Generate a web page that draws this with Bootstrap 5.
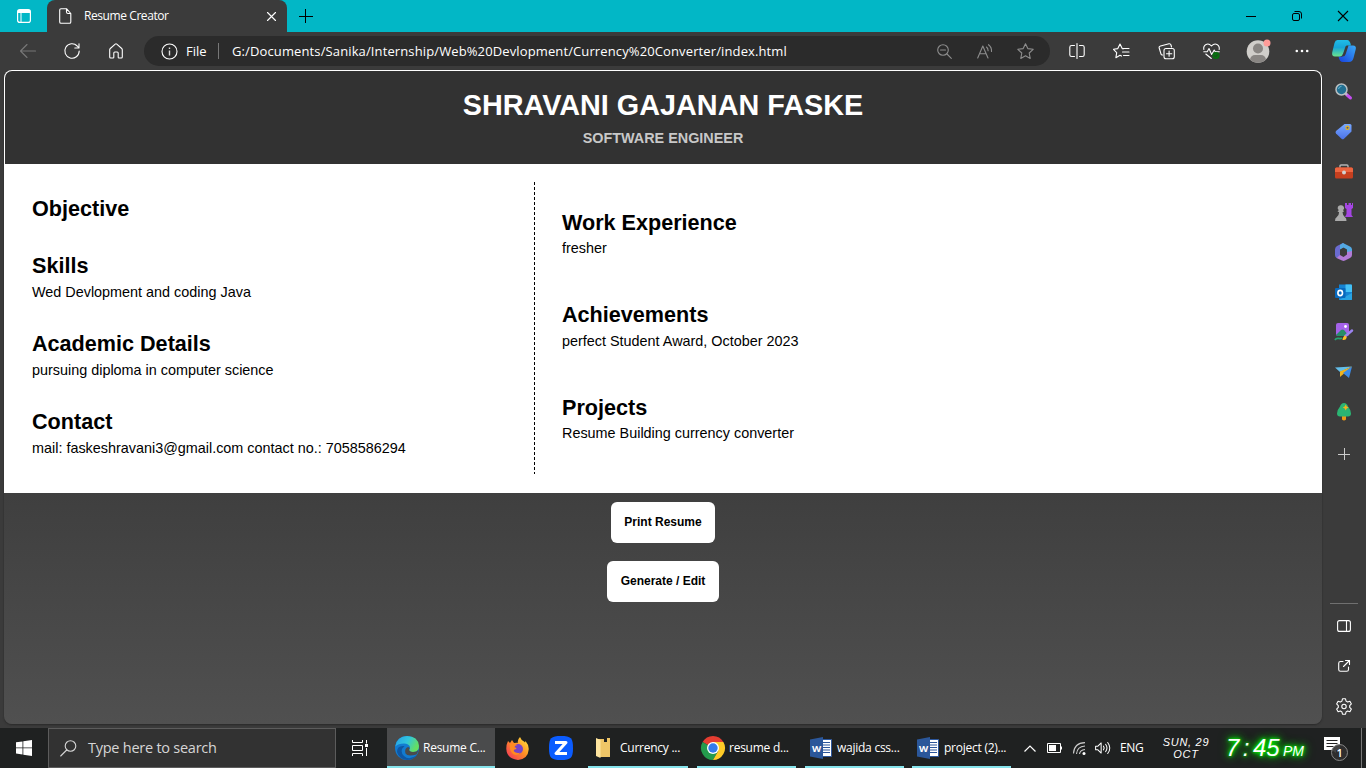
<!DOCTYPE html>
<html lang="en">
<head>
<meta charset="utf-8">
<title>Resume Creator</title>
<link href="https://cdn.jsdelivr.net/npm/bootstrap@5.3.0/dist/css/bootstrap.min.css" rel="stylesheet">
<style>
body{width:1366px;height:768px;overflow:hidden;background:#3b3b3b;color:#fff;font-family:"Open Sans","Noto Sans",sans-serif;font-size:12px;line-height:16px}
svg{display:block;flex:none;overflow:visible}
.ln{fill:none;stroke:currentColor;stroke-width:1.1;stroke-linecap:round;stroke-linejoin:round}
.titlebar{height:32px;background:#02b7c6}
.tabs-btn{width:47px}
.tab-active{width:240px;background:#3b3b3b;border-radius:8px 8px 0 0;padding:0 10px 0 12px}
.tab-name{margin-left:12px;letter-spacing:-.42px}
.win-btn{width:46px;color:#000}
.toolbar{height:38px;padding-left:6px}
.tool{width:44px}
.addr{width:906px;height:30px;margin:0 5px 0 6px;border-radius:15px;background:#2b2b2b;padding:0 4px 0 17px}
.addr .tool{width:40.5px;color:#8d8d8d}
.addr-label{font-size:13px;margin-left:8px;width:32px}
.addr-rule{width:1px;height:16px;background:#777}
.addr-url{font-size:13px;letter-spacing:.12px;margin-left:13px;white-space:nowrap}
.ext .tool{width:44.6px}
.window-body{height:658px}
.viewport-box{width:1318px;height:654px;margin-left:4px;border-radius:8px;background:linear-gradient(#323232,#323232 94px,#3f3f3f 423px,#505050);font-family:"Liberation Sans",Arial,sans-serif;color:#000;box-shadow:0 1px 2px #292929}
.resume{height:423px;background:#fff;padding:1px 1px 0;border-radius:8px 8px 0 0}
.resume-head{height:93px;background:#323232;border-radius:7px 7px 0 0;padding-top:17px}
.resume-head h1{font-size:28.8px;line-height:34px;font-weight:700;color:#fff}
.resume-head h2{font-size:14.4px;line-height:18px;font-weight:700;color:#c8c8c8;margin-top:7px}
.resume-cols{padding-top:18px}
.col-left{width:530px;height:292px;padding:14px 0 0 27px;background:repeating-linear-gradient(#000 0 3px,transparent 3px 5px) right/1px 100% no-repeat}
.col-right{padding:28px 0 0 27px}
.resume h3{font-size:21.6px;line-height:26px;font-weight:700;margin:0}
.resume p{font-size:14.4px;line-height:17px;margin:5px 0 0}
.col-left section{height:78px}
.col-left section:first-child{height:57px}
.col-right section{height:92px}
.col-right section + section{height:93px}
.col-right p{margin-top:4px}
.col-right section:nth-child(2) p{margin-top:5px}
.act{height:41px;border-radius:6px;background:#fff;color:#000;font-size:12px;font-weight:700;padding:0 13.5px;line-height:39px;border:0}
.sidebar{width:44px;padding-top:1.6px}
.sidebar .side{height:40.1px;margin-left:-1px}
.side-rule{width:28px;height:1px;background:#707070}
.taskbar{height:40px;background:#1f2121}
.search{width:288px;height:40px;background:#323232;border:1px solid #5c5c5c;padding-left:11px;font-size:14.5px;color:#d6d6d6}
.search-label{margin-left:11px;letter-spacing:-.25px}
.task{height:40px;white-space:nowrap;letter-spacing:-.25px}
.task.open{border-bottom:2px solid #86e4ec;padding-top:2px}
.task.current{background:#4a4b4c}
.date{width:50px;font:italic 11px/12px "Liberation Sans",sans-serif;letter-spacing:.7px;text-align:center}
.clock{width:78px;height:26px;font:italic 400 24px/26px "Liberation Sans",sans-serif;text-shadow:0 0 3px #0f0,0 0 5px #0f0,0 0 9px #0d0,0 0 12px #0a0}
.clock small{font-size:14px;line-height:26px;padding-top:3px}
</style>
</head>
<body class="d-flex flex-column">

<header class="titlebar d-flex flex-shrink-0">
  <div class="tabs-btn d-flex align-items-center justify-content-center">
    <svg width="14" height="14" viewBox="0 0 14 14"><rect x=".6" y=".6" width="12.8" height="12.8" rx="2.2" fill="none" stroke="#fff" stroke-width="1.2"/><path d="M1 1h12v3H1z" fill="#fff"/><path d="M4 4v9" stroke="#fff"/></svg>
  </div>
  <div class="tab-active d-flex align-items-center">
    <svg width="13" height="16" viewBox="0 0 13 16"><path class="ln" d="M2 .7h5.5l4.300 4.800V14q0 1.300-1.300 1.300H2Q.7 15.300.7 14V2Q.7.7 2 .7zM7.500.7V4q0 1.500 1.500 1.500h2.800"/></svg>
    <span class="tab-name">Resume Creator</span>
    <svg class="ms-auto" width="11" height="11" viewBox="0 0 11 11"><path class="ln" d="M1.500 1.500l8 8M9.500 1.500l-8 8"/></svg>
  </div>
  <div class="d-flex align-items-center text-black ps-2 ms-1"><svg width="14" height="14" viewBox="0 0 14 14"><path d="M6.500 0v14M0 7.500h14" stroke="#000"/></svg></div>
  <div class="d-flex ms-auto">
    <div class="win-btn d-flex align-items-center justify-content-center"><svg width="10" height="10"><path d="M0 5.500h10" stroke="#000"/></svg></div>
    <div class="win-btn d-flex align-items-center justify-content-center"><svg width="10" height="10" viewBox="0 0 10 10"><g fill="none" stroke="#000"><rect x=".5" y="2.500" width="7" height="7" rx="1.500"/><path d="M2.500.5H7Q9.500.5 9.500 3v4.500"/></g></svg></div>
    <div class="win-btn d-flex align-items-center justify-content-center"><svg width="10" height="10"><path d="M0 0l10 10M10 0L0 10" stroke="#000" stroke-width="1.100"/></svg></div>
  </div>
</header>

<nav class="toolbar d-flex align-items-center flex-shrink-0">
  <div class="tool d-flex justify-content-center" style="color:#777"><svg width="16" height="14" viewBox="0 0 16 14"><path class="ln" d="M7 .5L.5 7 7 13.500M.5 7h15"/></svg></div>
  <div class="tool d-flex justify-content-center"><svg width="16" height="16" viewBox="0 0 16 16"><path class="ln" d="M15.200 8A7.200 7.200 0 1 1 13.200 3L15 5M15 .8V5h-4.200"/></svg></div>
  <div class="tool d-flex justify-content-center"><svg width="14" height="16" viewBox="0 0 14 16"><path class="ln" d="M.7 6.800Q.7 6 1.300 5.500L6.200 1.100q.8-.7 1.600 0l4.900 4.400q.6.5.6 1.300V14q0 1-1 1H10q-.8 0-.8-.8V10q0-1-1-1H5.800q-1 0-1 1v4.200q0 .8-.8.8H1.700q-1 0-1-1z"/></svg></div>
  <div class="addr d-flex align-items-center">
    <svg width="17" height="17" viewBox="0 0 17 17"><circle class="ln" cx="8.500" cy="8.500" r="7.500"/><path d="M8.500 7.500v5M8.500 4.500v1.500" stroke="#ddd" stroke-width="1.400"/></svg>
    <span class="addr-label">File</span><span class="addr-rule"></span>
    <span class="addr-url">G:/Documents/Sanika/Internship/Web%20Devlopment/Currency%20Converter/index.html</span>
    <div class="tool d-flex justify-content-center ms-auto"><svg width="15" height="15" viewBox="0 0 15 15"><circle class="ln" cx="6" cy="6" r="5.300"/><path class="ln" d="M3.500 6h5M10 10l4.300 4.300"/></svg></div>
    <div class="tool d-flex justify-content-center"><svg width="16" height="15" viewBox="0 0 16 15"><path class="ln" d="M.7 14L5.800 2 11 14M2.500 9.800h6.700M9.500 3q1.600 1.300 1.600 3.800M11.500.7q3.300 2.300 3 6.800"/></svg></div>
    <div class="tool d-flex justify-content-center"><svg width="17" height="16" viewBox="0 0 17 16"><path class="ln" d="M8.500.7l2.300 4.900 5.400.7-4 3.700 1 5.400-4.700-2.600-4.700 2.600 1-5.400-4-3.700 5.400-.7z"/></svg></div>
  </div>
  <div class="ext d-flex align-items-center">
    <div class="tool d-flex justify-content-center"><svg width="16" height="16" viewBox="0 0 16 16"><path class="ln" d="M5.500 2.500H2.600Q.8 2.500.8 4.300v7.400q0 1.800 1.800 1.800h2.900M10.500 2.500h2.900q1.800 0 1.800 1.800v7.400q0 1.800-1.800 1.800h-2.900M8 .5v15"/></svg></div>
    <div class="tool d-flex justify-content-center"><svg width="17" height="16" viewBox="0 0 17 16"><path class="ln" d="M10.500 5.800L9.200 5.600 7 1 4.800 5.600l-4.300.7 3.200 3.400-.8 5L7 12.300l1.500.8M10 5.500h6M9.500 9h6.500M10.500 12.500H16"/></svg></div>
    <div class="tool d-flex justify-content-center"><svg width="17" height="17" viewBox="0 0 17 17"><path class="ln" d="M13.500 4L13 2Q12.500.5 11 .8L2.500 3Q.7 3.500 1.200 5L3 11q.3 1.200 1.700 1"/><rect class="ln" x="6" y="5.500" width="10.300" height="10.300" rx="2"/><path class="ln" d="M11.100 8v5.300M8.500 10.700h5.300"/></svg></div>
    <div class="tool d-flex justify-content-center"><svg width="17" height="16" viewBox="0 0 17 16"><path class="ln" d="M.8 6.500C0 1.500 5-.8 8.500 3 12-.8 17 1.500 16.200 6.500M.8 8.700h3.400L6 5.500l2.700 6 2.500-4.500 1.100 1.700h4M2.800 11l5.500 4.500"/><circle cx="13" cy="12.500" r="3.600" fill="#087010"/><path d="M11.300 12.500l1.200 1.300 2.200-2.500" fill="none" stroke="#263b26"/></svg></div>
    <div class="tool d-flex justify-content-center ps-1"><svg width="24" height="24" viewBox="0 0 24 24"><defs><clipPath id="face"><circle cx="12" cy="12.500" r="11.300"/></clipPath></defs><circle cx="12" cy="12.500" r="11.300" fill="#d0ceca"/><g clip-path="url(#face)" fill="#898683"><circle cx="12" cy="9.500" r="5"/><rect x="4" y="16" width="16" height="14" rx="5"/></g><circle cx="21" cy="4" r="3.500" fill="#ff9c98"/></svg></div>
    <div class="tool d-flex justify-content-center ps-1"><svg width="14" height="4" fill="#fff"><circle cx="1.800" cy="2" r="1.300"/><circle cx="7" cy="2" r="1.300"/><circle cx="12.200" cy="2" r="1.300"/></svg></div>
    <div class="tool d-flex justify-content-center" style="width:43px"><svg width="24" height="22" viewBox="0 0 24 22"><defs><linearGradient id="cpa" x1="0" y1="0" x2="0" y2="1"><stop stop-color="#20bde8"/><stop offset=".45" stop-color="#16a5d8"/><stop offset="1" stop-color="#6be48d"/></linearGradient><linearGradient id="cpb" x1="0" y1="1" x2="1" y2="0"><stop stop-color="#1740df"/><stop offset="1" stop-color="#3aacf6"/></linearGradient></defs><path d="M13 5.500h8q3.500 0 2.800 3.500L21.500 18q-1 4-4.500 4h-6q-3.500 0-4.500-5.500H10z" fill="url(#cpb)"/><path d="M5.500 0h9.500q3 0 4 5.500-4.500-.5-5.500 2.500L11 14q-1 2.500-3.500 2.500H3q-3.500 0-2.800-4L2.500 3Q3.300 0 5.500 0z" fill="url(#cpa)"/><path d="M13.500 6.500q.8-1.500 2.500-1h.5L13.700 14q-.8 2.500-3 2.500H8.500Q10.500 16 11 14z" fill="#3b3b3b"/></svg></div>
  </div>
</nav>

<div class="window-body d-flex flex-shrink-0">
  <main class="viewport-box flex-shrink-0">
    <article class="resume">
      <div class="resume-head text-center"><h1 class="mb-0">SHRAVANI GAJANAN FASKE</h1><h2 class="mb-0">SOFTWARE ENGINEER</h2></div>
      <div class="resume-cols d-flex">
        <div class="col-left">
          <section><h3>Objective</h3></section>
          <section><h3>Skills</h3><p>Wed Devlopment and coding Java</p></section>
          <section><h3>Academic Details</h3><p>pursuing diploma in computer science</p></section>
          <section><h3>Contact</h3><p>mail: faskeshravani3@gmail.com contact no.: 7058586294</p></section>
        </div>
        <div class="col-right">
          <section><h3>Work Experience</h3><p>fresher</p></section>
          <section><h3>Achievements</h3><p>perfect Student Award, October 2023</p></section>
          <section><h3>Projects</h3><p>Resume Building currency converter</p></section>
        </div>
      </div>
    </article>
    <div class="d-flex flex-column align-items-center" style="gap:18px;padding-top:9px">
      <button class="act">Print Resume</button>
      <button class="act">Generate / Edit</button>
    </div>
  </main>

  <aside class="sidebar d-flex flex-column align-items-center">
    <div class="side d-flex align-items-center"><svg width="17" height="17" viewBox="0 0 17 17"><path d="M11.500 11.500l4 3.500" stroke="#c44df0" stroke-width="3" stroke-linecap="round"/><path d="M10 10l2 2" stroke="#b9bfc2" stroke-width="2"/><circle cx="6.500" cy="6.500" r="5.500" fill="#226f91" stroke="#b9bfc2" stroke-width="1.500"/><path d="M3.500 6q.5-2.500 3-2.700" stroke="#65b9d6" fill="none"/></svg></div>
    <div class="side d-flex align-items-center"><svg width="17" height="17" viewBox="0 0 17 17"><defs><linearGradient id="tg" x1="0" y1="0" x2="0" y2="1"><stop stop-color="#78a8ff"/><stop offset="1" stop-color="#4b72e8"/></linearGradient></defs><path d="M9.500 1H15q1.500 0 1.500 1.500v6L9 15.800q-1.300 1-2.500 0L1 10.500q-1-1.200 0-2.400z" fill="url(#tg)"/><circle cx="12.500" cy="4.700" r="1.600" fill="#465791" stroke="#e6b51e" stroke-width="1.200"/></svg></div>
    <div class="side d-flex align-items-center"><svg width="18" height="15" viewBox="0 0 18 15"><path d="M5 4V2q0-1 1-1h6q1 0 1 1v2" fill="none" stroke="#b4b4b4" stroke-width="1.400"/><rect y="3.500" width="18" height="11" rx="1.500" fill="#c63f1f"/><path d="M0 8V5q0-1.500 1.500-1.500h15Q18 3.500 18 5v3z" fill="#ed6540"/><circle cx="9" cy="8.500" r="2" fill="#d2d2d2"/></svg></div>
    <div class="side d-flex align-items-center"><svg width="18" height="18" viewBox="0 0 18 18"><path d="M10 0h2v2h1.500V0H16v2h1V0h1v5l-1.500 1v6l1.500 2h-8l1.500-3V6L10 5z" fill="#a545e4"/><path d="M6 2.200a2.800 2.800 0 0 1 2 5l1.200 1-1.700 1q.2 3 2.500 5 1.500.8 1.500 3.800H0q0-3 1.600-3.800 2.500-2 2.500-5l-1.700-1 1.400-1a2.800 2.800 0 0 1 2.200-5z" fill="#aaa"/></svg></div>
    <div class="side d-flex align-items-center"><svg width="17" height="18" viewBox="0 0 17 18"><path d="M8 0L2 3Q0 4 0 6.500V12q0 2 1.500 3L5 13.500V6l6-3z" fill="#6a6bd0"/><path d="M8 0l7 3.500q2 1 2 3V12l-5-2.500V6.500L8.500 4.500 5 6.500V2z" fill="#53a9e3"/><path d="M17 8v4q0 2-2 3l-5 2.600q-1.500.8-3 0L1.500 15 5 12l3.500 2L12 11.500V9z" fill="#b27bd7"/></svg></div>
    <div class="side d-flex align-items-center"><svg width="17" height="17" viewBox="0 0 17 17"><path d="M4 .5h12q1 0 1 1V16H4z" fill="#1583d2"/><path d="M10.500.5H16q1 0 1 1V8h-6.500z" fill="#44c1f5"/><path d="M4 16l13-7v6q0 1-1 1z" fill="#28a3e3"/><rect y="4" width="10.500" height="10" rx="1" fill="#0869bd"/><ellipse cx="5.200" cy="9" rx="2.300" ry="2.600" fill="none" stroke="#fff" stroke-width="1.600"/></svg></div>
    <div class="side d-flex align-items-center"><svg width="18" height="18" viewBox="0 0 18 18"><rect x="1" width="13" height="13" rx="2" fill="#a462e8"/><path d="M1 12l5-5q1.500-1 3 0l4 5q-.5 1-2 1H3q-1.500 0-2-1z" fill="#268d68"/><circle cx="10.500" cy="3.500" r="1.400" fill="#fff"/><path d="M0 17q1-2 3.500-1.600T7 15" stroke="#25a36f" stroke-width="1.700" fill="none"/><path d="M10.500 13L17 7.500" stroke="#9b83ef" stroke-width="2.500" stroke-linecap="round"/><path d="M7.500 17q.5-4 2.800-4.500l1.500 2Q11 17.500 7.500 17z" fill="#ffc126"/></svg></div>
    <div class="side d-flex align-items-center"><svg width="17" height="13" viewBox="0 0 17 13"><path d="M0 1.500l17-1-12 5.500z" fill="#63bee9"/><path d="M17 .5L5 5.500V11l4-3.500z" fill="#f0b31c"/><path d="M17 .5L8 7l6 5z" fill="#3b8be8"/></svg></div>
    <div class="side d-flex align-items-center"><svg width="14" height="18" viewBox="0 0 14 18"><path d="M5 12h4v4.500q-2 2-4 0z" fill="#eb9a15"/><path d="M7 0q3 0 4 3.500 3 3.500 3 7 0 3-3 3H3q-3 0-3-3 0-3.500 3-7Q4 0 7 0z" fill="#2bb573"/><path d="M8.700 1.500l1 2 2 1-2 1-1 2-1-2-2-1 2-1z" fill="#f6b21c"/></svg></div>
    <div class="side d-flex align-items-center pt-1"><svg width="12" height="12"><path d="M6.500 0v12M0 6.500h12" stroke="#ccc"/></svg></div>
    <div class="side-rule mt-auto"></div>
    <div class="d-flex flex-column align-items-center" style="padding:2.500px 0 1.500px">
      <div class="side d-flex align-items-center ms-0"><svg width="14" height="12" viewBox="0 0 14 12"><rect class="ln" x=".6" y=".6" width="12.800" height="10.800" rx="2"/><path class="ln" d="M9.500.6v10.800"/></svg></div>
      <div class="side d-flex align-items-center ms-0"><svg width="12" height="12" viewBox="0 0 12 12"><path class="ln" d="M5 1.500H2.500q-1.800 0-1.800 1.800v6.200q0 1.800 1.800 1.800h6.200q1.800 0 1.800-1.800V7M7.500.5h4v4M5.500 6.500l6-6"/></svg></div>
      <div class="side d-flex align-items-center ms-0"><svg width="16" height="17" viewBox="0 0 16 17"><path class="ln" d="M6.500.8h3l.6 2.300 1.500.9 2.300-.7 1.500 2.600-1.700 1.700v1.800l1.700 1.700-1.500 2.600-2.300-.7-1.500.9-.6 2.300h-3l-.6-2.300-1.500-.9-2.300.7-1.500-2.600 1.700-1.700V7.600L.6 5.900l1.500-2.600 2.300.7 1.500-.9z"/><circle class="ln" cx="8" cy="8.500" r="2.200"/></svg></div>
    </div>
  </aside>
</div>

<footer class="taskbar d-flex align-items-center flex-shrink-0">
  <div class="d-flex justify-content-center" style="width:48px"><svg width="16" height="16" viewBox="0 0 16 16" fill="#fff"><path d="M0 2.300L6.500 1.400v6.100H0zM7.300 1.200L16 0v7.500H7.300zM0 8.300h6.500v6.200L0 13.600zM7.300 8.300H16V16l-8.700-1.200z"/></svg></div>
  <div class="search d-flex align-items-center"><svg width="17" height="17" viewBox="0 0 17 17"><circle class="ln" cx="10.500" cy="6" r="5.300"/><path class="ln" d="M6.700 10L.7 16"/></svg><span class="search-label">Type here to search</span></div>
  <div class="d-flex justify-content-center" style="width:48px;margin-right:3px"><svg width="17" height="16" viewBox="0 0 17 16"><path d="M.5 0v2.500h10V0M.5 16v-2.500h10V16M.5 5.500h10v5H.5zM14.500 0v3.500M14.500 8v8" fill="none" stroke="#fff"/><path d="M13 4h3v3h-3z" fill="#fff"/></svg></div>
  <div class="task open current d-flex align-items-center" style="width:108px;padding-left:8px">
    <svg width="24" height="24" viewBox="0 0 24 24"><defs><linearGradient id="ea" x1="0" y1="0" x2="1" y2=".4"><stop stop-color="#269ce8"/><stop offset=".55" stop-color="#31c6dc"/><stop offset="1" stop-color="#65df61"/></linearGradient></defs><circle cx="12" cy="12" r="12" fill="#127bd0"/><path d="M.3 10.500Q2 0 12 0q11 0 12 10 0 6-6 6-4 0-4-2 1.500-1.300 1-3Q14 7.500 9 7.500q-6 0-8.700 3z" fill="url(#ea)"/><path d="M9.500 10Q4 15 9 20q5 5 13-1-4 5-10 5-8-1-10-8 0-7 7.500-6z" fill="#0e57a4"/><path d="M14 14q1 2 4 2 4 0 5.500-2.500-.5 2.700-2 5-9 2.500-11-1Q9 12.500 13 11q2.500.5 1 3z" fill="#4a4b4c"/></svg>
    <span style="margin-left:4px">Resume C...</span></div>
  <div class="d-flex justify-content-center" style="width:44px"><svg width="23" height="23" viewBox="0 0 23 23"><defs><linearGradient id="fx" x1="1" y1="0" x2="0" y2="1"><stop stop-color="#fff044"/><stop offset=".45" stop-color="#ff9124"/><stop offset="1" stop-color="#f32a60"/></linearGradient></defs><path d="M2 4l2 2 2-3 2 3q2-.5 4-.2Q11 3 14 0q1 3 4 4.500l1 1 .5-1.500Q23 8 22.700 12.500 22 22 12 23 1 22 .3 12 .2 7.500 2 4z" fill="url(#fx)"/><circle cx="12" cy="12" r="5" fill="#7544c8"/><path d="M4 7q4-1.500 7.500 1-3 .5-3 2.300 2 0 2 1.700-2.500 0-3 2 3 3 7 1.500-3 4-7.500 1.500Q3 13 4 7z" fill="#ff8b20"/></svg></div>
  <div class="d-flex justify-content-center" style="width:44px"><svg width="24" height="24" viewBox="0 0 24 24"><path d="M12 0c10 0 12 2 12 12s-2 12-12 12S0 22 0 12 2 0 12 0z" fill="#0b5cff"/><path d="M6 6.500h11L7 17.500h11" fill="none" stroke="#fff" stroke-width="3" stroke-linejoin="round"/></svg></div>
  <div class="task open d-flex align-items-center" style="width:100px;margin-left:5px;padding-left:8px"><svg width="14" height="20" viewBox="0 0 14 20"><path d="M0 1h8v3h3V0h3v19H3z" fill="#efc667"/><path d="M0 0l4.500 2v18L0 18z" fill="#ffe6a0"/></svg><span style="margin-left:10px">Currency ...</span></div>
  <div class="task open d-flex align-items-center" style="width:99px;margin-left:9px;padding-left:4px"><svg width="24" height="24" viewBox="0 0 24 24"><path d="M12 12L1.600 6A12 12 0 0 1 22.400 6z" fill="#e43d31"/><path d="M12 12L1.600 6A12 12 0 0 0 12 24l5.200-9z" fill="#249b4d"/><path d="M12 6h10.400A12 12 0 0 1 12 24l5.200-9z" fill="#ffcb27"/><circle cx="12" cy="12" r="6" fill="#fff"/><circle cx="12" cy="12" r="4.700" fill="#347bea"/></svg><span style="margin-left:4px">resume d...</span></div>
  <div class="task open d-flex align-items-center" style="width:99px;margin-left:9px;padding-left:5px"><svg width="22" height="22" viewBox="0 0 22 22"><path d="M12 2.500h9.500v17H12z" fill="#fff" stroke="#2c569b"/><path d="M13 5.500h7M13 8h7M13 10.500h7M13 13h7M13 15.500h7" stroke="#2c569b" stroke-width="1.100"/><path d="M0 2.500L13 0v22L0 19.500z" fill="#2b579a"/><text x="2" y="14.500" font-size="9.500" font-weight="700" fill="#fff" font-family="Open Sans">W</text></svg><span style="margin-left:5px">wajida css...</span></div>
  <div class="task open d-flex align-items-center" style="width:99px;margin-left:8px;padding-left:5px"><svg width="22" height="22" viewBox="0 0 22 22"><path d="M12 2.500h9.500v17H12z" fill="#fff" stroke="#2c569b"/><path d="M13 5.500h7M13 8h7M13 10.500h7M13 13h7M13 15.500h7" stroke="#2c569b" stroke-width="1.100"/><path d="M0 2.500L13 0v22L0 19.500z" fill="#2b579a"/><text x="2" y="14.500" font-size="9.500" font-weight="700" fill="#fff" font-family="Open Sans">W</text></svg><span style="margin-left:5px">project (2)...</span></div>
  <div class="d-flex align-items-center" style="margin-left:13px">
    <svg width="12" height="7"><path d="M.5 6.500L6 1l5.500 5.500" fill="none" stroke="#fff" stroke-width="1.200"/></svg>
    <svg style="margin-left:11px" width="15" height="10" viewBox="0 0 15 10"><path d="M.5.5h13v9H.5zM14.500 3.500v3" fill="none" stroke="#fff"/><path d="M2 2h7v6H2z" fill="#fff"/></svg>
    <svg style="margin-left:11px" width="13" height="13" viewBox="0 0 13 13"><g fill="none" stroke="#ccc" stroke-width="1.100"><path d="M.5 11.500Q1 1 12 .6M3.500 12Q4 4.500 12 4M6.500 12q.5-4 5.500-4.500"/></g><circle cx="11" cy="11.500" r="1.500" fill="#fff"/></svg>
    <svg style="margin-left:9px" width="16" height="12" viewBox="0 0 17 13"><path class="ln" d="M.5 4.500H3l3.500-3.500v11L3 8.500H.5zM9 4.500q1.500 2 0 4M11.300 2.500q3 4 0 8M13.600.5q4.500 6 0 12"/></svg>
    <span class="lang" style="margin-left:9px;width:24px;letter-spacing:-.3px">ENG</span>
  </div>
  <div class="date" style="margin-left:17px">SUN, 29<br>OCT</div>
  <div class="clock d-flex justify-content-between" style="margin-left:15px"><span>7</span><span>:</span><span>45</span><small>PM</small></div>
  <svg style="margin-left:20px;margin-top:2px" width="26" height="24" viewBox="0 0 26 24"><path d="M0 0h16v13h-4v3l-4-3H0z" fill="#fff"/><path d="M2.500 3.500h11M2.500 6.500h11M2.500 9.500h7" stroke="#222"/><circle cx="15.500" cy="15.500" r="8" fill="#303030" fill-opacity=".9" stroke="#888"/><text x="12.500" y="19.500" font-size="11" font-weight="600" fill="#fff" font-family="Open Sans">1</text></svg>
  <div class="tail-rule ms-auto" style="width:1px;height:40px;background:#777;margin-right:4px"></div>
</footer>
<script src="https://cdn.jsdelivr.net/npm/bootstrap@5.3.0/dist/js/bootstrap.bundle.min.js"></script>
</body>
</html>
